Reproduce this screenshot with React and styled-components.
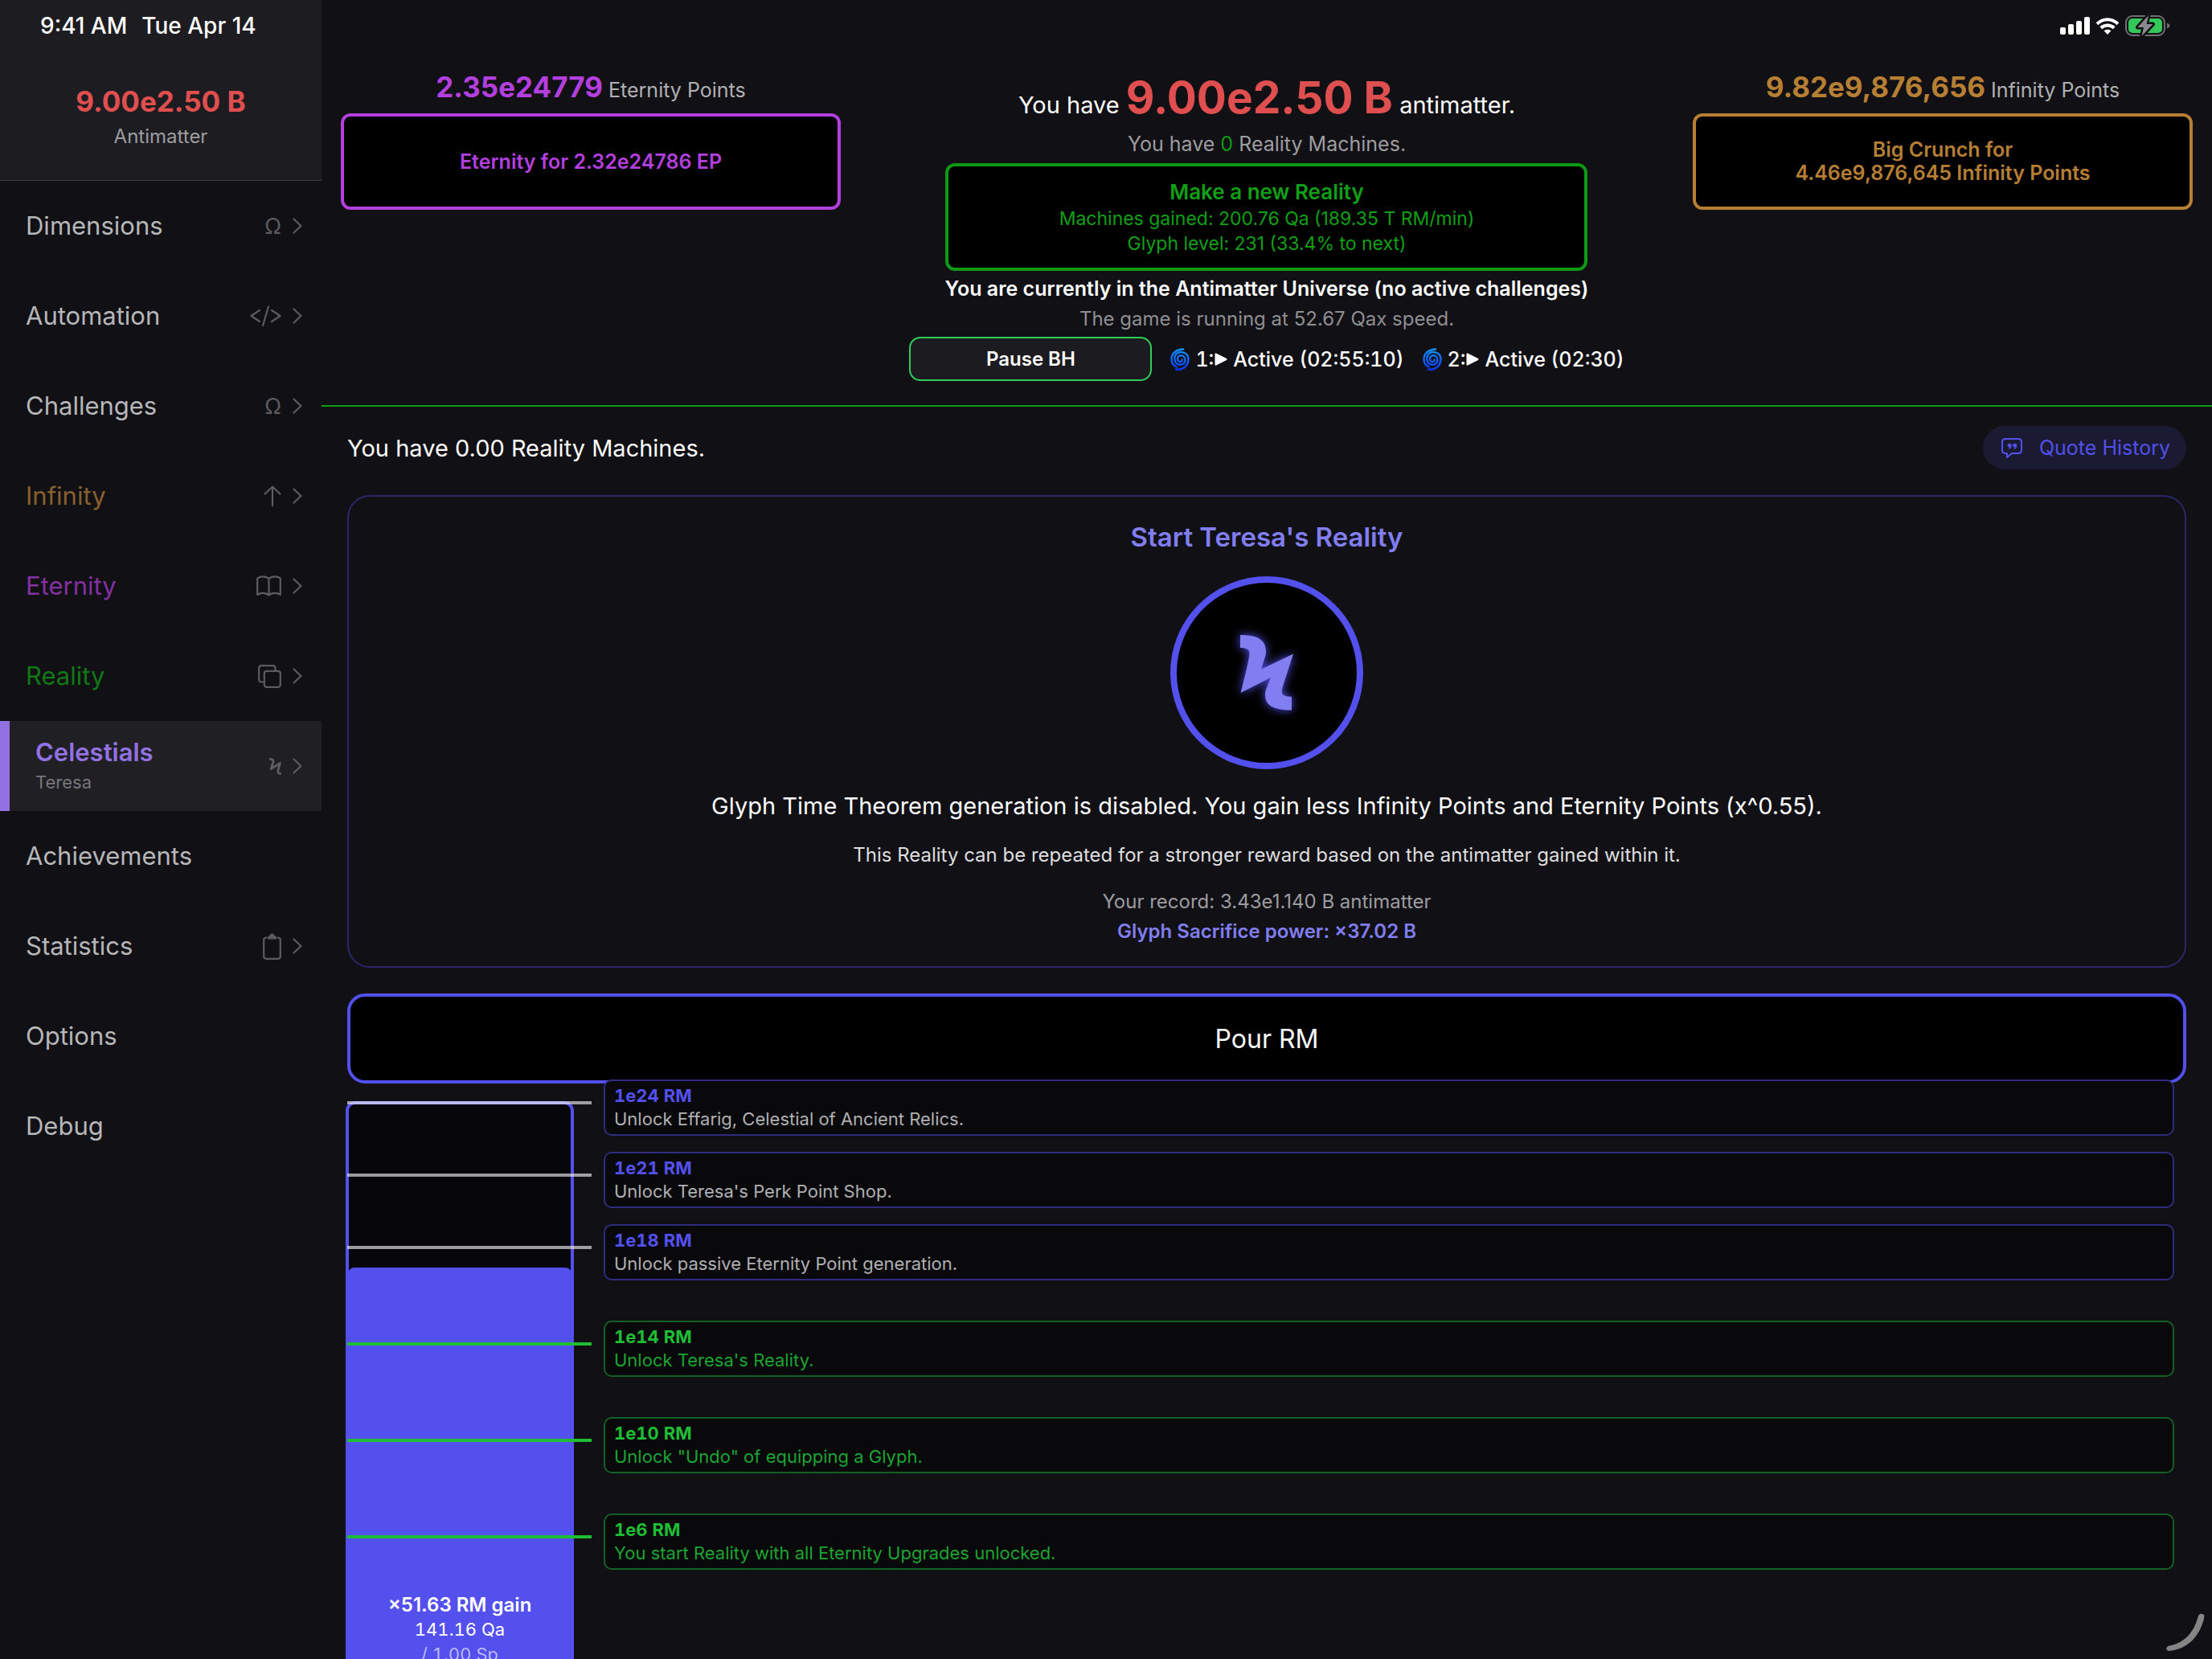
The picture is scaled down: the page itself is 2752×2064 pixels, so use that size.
import React from 'react'
import styled, { createGlobalStyle } from 'styled-components';

const GlobalStyle = createGlobalStyle`
    * {
        box-sizing: border-box;
    }
    body {
        margin: 0;
        background: #111015;
        color: white;
        font-family: Inter, "Liberation Sans", sans-serif;
        font-size: 24px;
    }
    button {
        font-family: inherit;
        cursor: pointer;
    }
    p, h1, h2 {
        margin: 0;
        font-weight: 400;
    }
`
const Container = styled.div`
    height: 100vh;
    display: flex;
    overflow: hidden;
`

/* sidebar */
const Sidebar = styled.aside`
    flex: 0 0 400px;
`
const SidebarTop = styled.div`
    background: #1d1c21;
    border-bottom: 1px solid #424146;
    padding-bottom: 33px;
    text-align: center;
`
const Clock = styled.div`
    display: flex;
    gap: 18px;
    padding: 0 50px;
    font-size: 28px;
    font-weight: 500;
    line-height: 64px;
    white-space: nowrap;
`
const SideAmount = styled.div`
    padding-top: 39px;
    font-size: 35px;
    font-weight: 700;
    line-height: 46px;
    color: #e04f50;
`
const SideLabel = styled.div`
    font-size: 24px;
    line-height: 42px;
    color: #9d9da0;
`
const NavItem = styled.a`
    height: 112px;
    display: flex;
    align-items: center;
    padding: 0 24px 0 32px;
    border-left: ${props => props.$active ? "12px solid #9272e2" : "none"};
    background: ${props => props.$active ? "#201f24" : "transparent"};
    color: ${props => props.$color};
    text-decoration: none;
`
const NavText = styled.div`
    flex: 1;
`
const NavName = styled.div`
    font-size: 31px;
    font-weight: ${props => props.$active ? 600 : 400};
    line-height: 40px;
`
const NavSub = styled.div`
    font-size: 22px;
    line-height: 34px;
    color: #77767a;
`
const NavIcons = styled.div`
    display: flex;
    align-items: center;
    gap: 14px;
    font-size: 27px;
    color: #5d5c60;
`

/* header */
const Main = styled.main`
    flex: 1;
    min-width: 0;
`
const StatusBar = styled.div`
    height: 64px;
    display: flex;
    align-items: center;
    justify-content: flex-end;
    gap: 7px;
    padding-right: 52px;
`
const Header = styled.header`
    display: flex;
    justify-content: space-between;
    padding: 23px 24px 30px;
    border-bottom: 2px solid #0f9a14;
`
const Currency = styled.section`
    flex: 0 1 622px;
    text-align: center;
`
const CurrencyLine = styled.div`
    font-size: 25px;
    line-height: 34px;
    margin-bottom: 12px;
    color: #b0b0b2;
`
const CurrencyAmount = styled.span`
    font-size: 35px;
    font-weight: 700;
    line-height: 42px;
    color: ${props => props.$color};
`
const PrestigeButton = styled.button`
    width: 100%;
    height: 120px;
    background: black;
    border: 4px solid ${props => props.$color};
    border-radius: 12px;
    color: ${props => props.$color};
    font-size: 25px;
    font-weight: 600;
    line-height: 29px;
`
const Center = styled.section`
    display: flex;
    flex-direction: column;
    align-items: center;
    gap: 8px;
`
const AntimatterLine = styled.div`
    font-size: 29px;
    line-height: 48px;
`
const AntimatterAmount = styled.span`
    font-size: 55px;
    font-weight: 700;
    line-height: 68px;
    color: #e04f50;
`
const MachineLine = styled.p`
    font-size: 25px;
    line-height: 32px;
    color: #9d9da0;
`
const Green = styled.span`
    color: #0f9a14;
`
const RealityButton = styled.button`
    width: 799px;
    height: 134px;
    background: black;
    border: 4px solid #0f9a14;
    border-radius: 12px;
    color: #0fa015;
    font-size: 23px;
    line-height: 31px;
`
const RealityTitle = styled.div`
    font-size: 26px;
    font-weight: 600;
    line-height: 36px;
`
const Info = styled.p`
    font-size: ${props => props.$large ? "25px" : "24px"};
    font-weight: ${props => props.$bold ? 600 : 400};
    line-height: 29px;
    color: ${props => props.$color || "white"};
`
const BlackHoles = styled.div`
    display: flex;
    align-items: center;
    gap: 23px;
`
const PauseButton = styled.button`
    width: 302px;
    height: 55px;
    background: #1c1b20;
    border: 2px solid #30cc58;
    border-radius: 14px;
    color: white;
    font-size: 24px;
    font-weight: 600;
`
const Hole = styled.div`
    display: flex;
    align-items: center;
    gap: 7px;
    font-size: 25px;
    font-weight: 500;
    font-variant-numeric: tabular-nums;
`
const HoleNumber = styled.span`
    display: flex;
    align-items: center;
    gap: 1px;
`

/* content */
const Content = styled.div`
    display: flex;
    flex-direction: column;
    padding: 24px 32px 0;
`
const TopRow = styled.div`
    display: flex;
    align-items: center;
    justify-content: space-between;
    font-size: 29px;
`
const QuoteButton = styled.button`
    height: 54px;
    display: flex;
    align-items: center;
    gap: 20px;
    padding: 0 20px 0 22px;
    background: #1b1a33;
    border: none;
    border-radius: 27px;
    color: #5350ee;
    font-size: 25px;
`
const Card = styled.section`
    margin: 32px 0;
    padding: 29px 32px;
    display: flex;
    flex-direction: column;
    align-items: center;
    gap: 28px;
    border: 2px solid #2a2869;
    border-radius: 28px;
    text-align: center;
`
const CardTitle = styled.h1`
    font-size: 33px;
    font-weight: 600;
    line-height: 42px;
    color: #817ef2;
`
const SigilButton = styled.button`
    width: 240px;
    height: 240px;
    display: flex;
    align-items: center;
    justify-content: center;
    padding: 0;
    background: black;
    border: 8px solid #5350ee;
    border-radius: 50%;
    color: #817ef2;
`
const Glow = styled.svg`
    overflow: visible;
    filter: drop-shadow(0 0 6px #5350ee);
`
const Rule = styled.p`
    font-size: 29px;
    line-height: 36px;
`
const Note = styled.p`
    font-size: 24px;
    line-height: 30px;
    color: #dededf;
`
const Record = styled.div`
    display: flex;
    flex-direction: column;
    gap: 8px;
`
const PourButton = styled.button`
    height: 112px;
    background: black;
    border: 4px solid #5350ee;
    border-radius: 22px;
    color: white;
    font-size: 32px;
`
const Progress = styled.div`
    display: flex;
    align-items: flex-start;
`
const Bar = styled.div`
    flex: 0 0 284px;
    height: 720px;
    margin: 22px 37px 0 -2px;
    position: relative;
    display: flex;
    flex-direction: column;
    justify-content: flex-end;
    padding-bottom: 12px;
    background: #070709;
    border: 4px solid #5350ee;
    border-radius: 12px;
    text-align: center;
`
const Fill = styled.div`
    position: absolute;
    left: -1px;
    right: -1px;
    bottom: 0;
    background: #5350ee;
    border-radius: 8px 8px 0 0;
`
const Tick = styled.div`
    position: absolute;
    left: -2px;
    width: 304px;
    height: 4px;
    margin-top: -4px;
    background: ${props => props.$done ? "#1ebd35" : "rgba(255, 255, 255, 0.6)"};
`
const BarGain = styled.div`
    position: relative;
    font-weight: 600;
    line-height: 31px;
`
const BarText = styled.div`
    position: relative;
    font-size: 22px;
    font-variant-numeric: tabular-nums;
    line-height: 31px;
    opacity: ${props => props.$faded ? 0.6 : 1};
`
const Unlocks = styled.div`
    flex: 1;
    margin: -5px 15px 0 0;
`
/* 30px for every order of magnitude down to the next unlock */
const UnlockSlot = styled.div`
    height: ${props => props.$orders * 30}px;
`
const Unlock = styled.div`
    height: 70px;
    padding: 3px 11px;
    background: #09090b;
    border: 2px solid ${props => props.$done ? "#146024" : "#2f2c80"};
    border-radius: 10px;
    color: ${props => props.$done ? "#1ba431" : "#b0b0b2"};
    font-size: 22px;
    line-height: 29px;
`
const UnlockName = styled.h2`
    font-size: 22px;
    font-weight: 700;
    font-variant-numeric: tabular-nums;
    line-height: 30px;
    color: ${props => props.$done ? "#1ebd35" : "#5350ee"};
`
const Grip = styled.svg`
    position: fixed;
    right: 9px;
    bottom: 8px;
`

const Stroke = ({ width, height, weight = 2.2, children }) => (
    <svg width={width} height={height} viewBox={`0 0 ${width} ${height}`} fill="none" stroke="currentColor" strokeWidth={weight} strokeLinecap="round" strokeLinejoin="round">
        {children}
    </svg>
)

const Chevron = () => (
    <Stroke width={12} height={20}><path d="M1.500 1.500 L10.500 10 L1.500 18.500"/></Stroke>
)

const icons = {
    omega: <span>Ω</span>,
    code: (
        <Stroke width={39} height={26}>
            <path d="M12 6 L1.500 13 L12 20 M27 6 L37.500 13 L27 20 M23 1.500 L16 25"/>
        </Stroke>
    ),
    arrow: (
        <Stroke width={22} height={26}><path d="M11 25 V1.500 M1.500 10.500 L11 1.500 L20.500 10.500"/></Stroke>
    ),
    book: (
        <Stroke width={31} height={26}>
            <path d="M15.500 4 C12 0.500 5 0.500 1.200 3.500 V24 C5 21 12 21 15.500 24.500 C19 21 26 21 29.800 24 V3.500 C26 0.500 19 0.500 15.500 4 Z M15.500 4 V24"/>
        </Stroke>
    ),
    copy: (
        <Stroke width={29} height={29}>
            <rect x="7.800" y="7.800" width="20" height="20" rx="3"/>
            <path d="M7.800 21.500 H4.200 Q1.200 21.500 1.200 18.500 V4.200 Q1.200 1.200 4.200 1.200 H18.500 Q21.500 1.200 21.500 4.200 V7.800"/>
        </Stroke>
    ),
    sigil: (
        <Stroke width={15} height={21} weight={2.8}>
            <path d="M1.200 1.500 C4.500 1.200 5.300 3 4.800 5.500 L2.200 13.500 L13.500 6.500 L11 15 C10.500 18 11.500 19.600 14 19.600"/>
        </Stroke>
    ),
    clipboard: (
        <Stroke width={23} height={33}>
            <path d="M4.500 5.500 H4.200 Q1.200 5.500 1.200 8.500 V28.800 Q1.200 31.800 4.200 31.800 H18.800 Q21.800 31.800 21.800 28.800 V8.500 Q21.800 5.500 18.800 5.500 H18.500"/>
            <path d="M7 6.500 Q7 4 9.500 4 Q9.500 1.500 11.500 1.500 Q13.500 1.500 13.500 4 Q16 4 16 6.500 Z" fill="currentColor"/>
        </Stroke>
    ),
}

const navItems = [
    { name: "Dimensions", icon: "omega" },
    { name: "Automation", icon: "code" },
    { name: "Challenges", icon: "omega" },
    { name: "Infinity", icon: "arrow", color: "#87602e" },
    { name: "Eternity", icon: "book", color: "#8430a2" },
    { name: "Reality", icon: "copy", color: "#107814" },
    { name: "Celestials", icon: "sigil", color: "#9272e2", sub: "Teresa", active: true },
    { name: "Achievements" },
    { name: "Statistics", icon: "clipboard" },
    { name: "Options" },
    { name: "Debug" },
]

const MAX_ORDER = 24
const poured = 141.16e15

const unlocks = [
    { order: 24, orders: 3, text: "Unlock Effarig, Celestial of Ancient Relics." },
    { order: 21, orders: 3, text: "Unlock Teresa's Perk Point Shop." },
    { order: 18, orders: 4, text: "Unlock passive Eternity Point generation." },
    { order: 14, orders: 4, text: "Unlock Teresa's Reality.", done: true },
    { order: 10, orders: 4, text: "Unlock \"Undo\" of equipping a Glyph.", done: true },
    { order: 6, orders: 4, text: "You start Reality with all Eternity Upgrades unlocked.", done: true },
]

const Cyclone = () => (
    <svg width="24" height="28" viewBox="0 0 24 28" fill="none" strokeLinecap="round">
        <defs>
            <linearGradient id="cyclone" x1="0" y1="0" x2="0" y2="28" gradientUnits="userSpaceOnUse">
                <stop offset="0" stopColor="#129bff"/>
                <stop offset="1" stopColor="#0a35ff"/>
            </linearGradient>
        </defs>
        <g stroke="url(#cyclone)" strokeWidth="2.400">
            <path d="M16 1.500 C7 1.500 1.500 7 1.500 14 C1.500 18.500 4 22 8 23.500"/>
            <path d="M7 26.500 C16 28 22.500 21.500 22.500 14 C22.500 8.500 18.500 5 13 5 C8 5 5.300 9 5.300 13.500 C5.300 18 8.500 20.800 12.300 20.800 C16 20.800 18.500 18 18.500 15 C18.500 11.500 16 9.200 13.200 9.200 C10.500 9.200 9 11.500 9 13.800 C9 15.800 10.500 17.200 12.300 17.200 C14 17.200 14.900 15.800 14.700 14.500"/>
        </g>
    </svg>
)

const Play = () => (
    <svg width="16" height="16" viewBox="0 0 16 16" fill="white">
        <path d="M0.500 1.500 Q0.500 0 2 0.500 L15 7 Q16 8 15 9 L2 15.500 Q0.500 16 0.500 14.500 Z"/>
    </svg>
)

const StatusIcons = () => (
    <>
        <svg width="37" height="22" viewBox="0 0 37 22" fill="white">
            <rect x="0" y="13" width="7" height="9" rx="2"/>
            <rect x="10" y="9" width="7" height="13" rx="2"/>
            <rect x="20" y="5" width="7" height="17" rx="2"/>
            <rect x="30" y="0" width="7" height="22" rx="2"/>
        </svg>
        <svg width="30" height="21" viewBox="0 0 30 21">
            <path d="M2 7.800 C9.500 0.500 20.500 0.500 28 7.800" fill="none" stroke="white" strokeWidth="4"/>
            <path d="M6.800 12.800 C11.500 8.500 18.500 8.500 23.200 12.800" fill="none" stroke="white" strokeWidth="4"/>
            <path d="M15 21 L10.500 16.300 C13 14.200 17 14.200 19.500 16.300 Z" fill="white"/>
        </svg>
        <svg width="56" height="28" viewBox="0 0 56 28">
            <rect x="1" y="2" width="48" height="24" rx="8" fill="none" stroke="#6f6e72" strokeWidth="2"/>
            <rect x="4" y="5" width="42" height="18" rx="5" fill="#34c759"/>
            <path d="M52 10.500 Q55.500 12 55.500 14 Q55.500 16 52 17.500 Z" fill="#6f6e72"/>
            <path d="M29 1 L15.500 16 H23 L20.500 27 L34.500 12 H26.500 Z" fill="#8a8a8e" stroke="#111015" strokeWidth="5" strokeLinejoin="round" paintOrder="stroke"/>
        </svg>
    </>
)

const QuoteIcon = () => (
    <svg width="28" height="27" viewBox="0 0 28 27" fill="none">
        <path d="M6 2 H22 Q26 2 26 6 V16 Q26 20 22 20 H14 L8 25 V20 H6 Q2 20 2 16 V6 Q2 2 6 2 Z" stroke="currentColor" strokeWidth="2" strokeLinejoin="round"/>
        <g fill="currentColor">
            <path d="M8.500 10 A2.600 2.600 0 1 1 13.700 10.500 Q13.500 14 10 15.200 Q11 13.800 11 12.600 Q8.500 12.500 8.500 10 Z"/>
            <path d="M15 10 A2.600 2.600 0 1 1 20.200 10.500 Q20 14 16.500 15.200 Q17.500 13.800 17.500 12.600 Q15 12.500 15 10 Z"/>
        </g>
    </svg>
)

const App = () => {
    return (
        <Container>
            <GlobalStyle />
            <Sidebar>
                <SidebarTop>
                    <Clock>
                        <span>9:41 AM</span>
                        <span>Tue Apr 14</span>
                    </Clock>
                    <SideAmount>9.00e2.50 B</SideAmount>
                    <SideLabel>Antimatter</SideLabel>
                </SidebarTop>
                <nav>
                    {navItems.map(item => (
                        <NavItem key={item.name} href={"#" + item.name.toLowerCase()} $active={item.active} $color={item.color || "#b7b7b9"}>
                            <NavText>
                                <NavName $active={item.active}>{item.name}</NavName>
                                {item.sub && <NavSub>{item.sub}</NavSub>}
                            </NavText>
                            {item.icon && (
                                <NavIcons>
                                    {icons[item.icon]}
                                    <Chevron />
                                </NavIcons>
                            )}
                        </NavItem>
                    ))}
                </nav>
            </Sidebar>
            <Main>
                <StatusBar><StatusIcons /></StatusBar>
                <Header>
                    <Currency>
                        <CurrencyLine>
                            <CurrencyAmount $color="#b33fdf">2.35e24779</CurrencyAmount> Eternity Points
                        </CurrencyLine>
                        <PrestigeButton $color="#b33fdf">Eternity for 2.32e24786 EP</PrestigeButton>
                    </Currency>
                    <Center>
                        <AntimatterLine>
                            You have <AntimatterAmount>9.00e2.50 B</AntimatterAmount> antimatter.
                        </AntimatterLine>
                        <MachineLine>You have <Green>0</Green> Reality Machines.</MachineLine>
                        <RealityButton>
                            <RealityTitle>Make a new Reality</RealityTitle>
                            <div>Machines gained: 200.76 Qa (189.35 T RM/min)</div>
                            <div>Glyph level: 231 (33.4% to next)</div>
                        </RealityButton>
                        <Info $bold $large>You are currently in the Antimatter Universe (no active challenges)</Info>
                        <Info $color="#8f8f92">The game is running at 52.67 Qax speed.</Info>
                        <BlackHoles>
                            <PauseButton>Pause BH</PauseButton>
                            <Hole>
                                <Cyclone />
                                <HoleNumber>1:<Play /></HoleNumber>
                                Active (02:55:10)
                            </Hole>
                            <Hole>
                                <Cyclone />
                                <HoleNumber>2:<Play /></HoleNumber>
                                Active (02:30)
                            </Hole>
                        </BlackHoles>
                    </Center>
                    <Currency>
                        <CurrencyLine>
                            <CurrencyAmount $color="#b67f33">9.82e9,876,656</CurrencyAmount> Infinity Points
                        </CurrencyLine>
                        <PrestigeButton $color="#b67f33">
                            Big Crunch for<br />4.46e9,876,645 Infinity Points
                        </PrestigeButton>
                    </Currency>
                </Header>
                <Content>
                    <TopRow>
                        <p>You have 0.00 Reality Machines.</p>
                        <QuoteButton><QuoteIcon /> Quote History</QuoteButton>
                    </TopRow>
                    <Card>
                        <CardTitle>Start Teresa's Reality</CardTitle>
                        <SigilButton aria-label="Start Teresa's Reality">
                            <Glow width="67" height="94" viewBox="0 0 67 94" fill="currentColor">
                                <path d="M0 0 C19 0 32 4 32 21 C32 27 28 34 26.500 42.500 L66 23.500 L53 64 C50 73 52 76.700 64 76.700 V93.500 C40 93.500 31 87 31 74 C31 69 34 63 38 53 L0.500 72 C4 59 11 32 11.500 23 C11.500 18 8 16 0 16 Z"/>
                            </Glow>
                        </SigilButton>
                        <Rule>Glyph Time Theorem generation is disabled. You gain less Infinity Points and Eternity Points (x^0.55).</Rule>
                        <Note>This Reality can be repeated for a stronger reward based on the antimatter gained within it.</Note>
                        <Record>
                            <Info $color="#9d9da0">Your record: 3.43e1.140 B antimatter</Info>
                            <Info $bold $color="#817ef2">Glyph Sacrifice power: ×37.02 B</Info>
                        </Record>
                    </Card>
                    <PourButton>Pour RM</PourButton>
                    <Progress>
                        <Bar>
                            <Fill style={{height: `${Math.log10(poured) / MAX_ORDER * 100}%`}}/>
                            {unlocks.map(u => (
                                <Tick key={u.order} $done={u.done} style={{top: (MAX_ORDER - u.order) * 30}}/>
                            ))}
                            <BarGain>×51.63 RM gain</BarGain>
                            <BarText>141.16 Qa</BarText>
                            <BarText $faded>/ 1.00 Sp</BarText>
                        </Bar>
                        <Unlocks>
                            {unlocks.map(u => (
                                <UnlockSlot key={u.order} $orders={u.orders}>
                                    <Unlock $done={u.done}>
                                        <UnlockName $done={u.done}>1e{u.order} RM</UnlockName>
                                        {u.text}
                                    </Unlock>
                                </UnlockSlot>
                            ))}
                        </Unlocks>
                    </Progress>
                </Content>
            </Main>
            <Grip width="50" height="50" viewBox="0 0 50 50">
                <path d="M42 4 Q45 0 49 3 Q50 5 49 8 C43 31 28 46 5 48 Q0 46 4 42 C22 39 36 28 42 4 Z" fill="#858585"/>
            </Grip>
        </Container>
    )
}

export default App;
